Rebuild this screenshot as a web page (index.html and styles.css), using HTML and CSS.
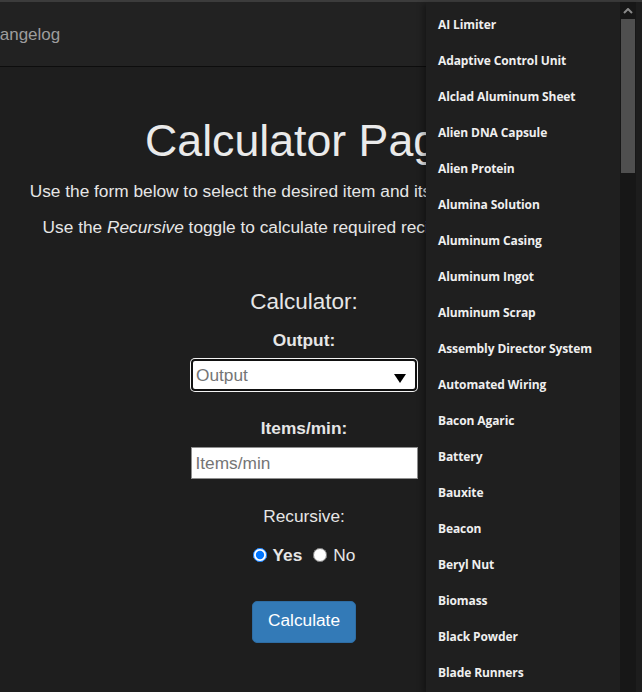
FILE: index.html
```html
<!DOCTYPE html>
<html lang="en">
<head>
<meta charset="utf-8">
<title>Calculator Page</title>
<link rel="stylesheet" href="styles.css">
</head>
<body>
<div class="topbar"></div>
<nav class="navbar">
  <a class="nav-link" href="#">Changelog</a>
</nav>
<main class="page">
  <h1 class="title">Calculator Page</h1>
  <p class="intro intro-first">Use the form below to select the desired item and its rate of production.</p>
  <p class="intro intro-second">Use the <em>Recursive</em> toggle to calculate required recipes for all inputs.</p>
  <form class="calc">
    <h3 class="calc-title">Calculator:</h3>
    <label class="field-label label-output">Output:</label>
    <div class="select">
      <span class="select-text">Output</span>
      <svg class="select-arrow" width="12" height="9" viewBox="0 0 12 9"><polygon points="0,0 12,0 6,9" fill="#000"/></svg>
    </div>
    <label class="field-label label-items">Items/min:</label>
    <input class="text-input" type="text" placeholder="Items/min">
    <div class="plain-label">Recursive:</div>
    <div class="radios">
      <label class="radio-opt"><input class="radio" type="radio" name="rec" checked><b class="radio-yes">Yes</b></label>
      <label class="radio-opt"><input class="radio" type="radio" name="rec"><span class="radio-no">No</span></label>
    </div>
    <button class="btn" type="button">Calculate</button>
  </form>
</main>

<div class="dropdown">
  <ul class="options">
    <li>AI Limiter</li>
    <li>Adaptive Control Unit</li>
    <li>Alclad Aluminum Sheet</li>
    <li>Alien DNA Capsule</li>
    <li>Alien Protein</li>
    <li>Alumina Solution</li>
    <li>Aluminum Casing</li>
    <li>Aluminum Ingot</li>
    <li>Aluminum Scrap</li>
    <li>Assembly Director System</li>
    <li>Automated Wiring</li>
    <li>Bacon Agaric</li>
    <li>Battery</li>
    <li>Bauxite</li>
    <li>Beacon</li>
    <li>Beryl Nut</li>
    <li>Biomass</li>
    <li>Black Powder</li>
    <li>Blade Runners</li>
  </ul>
  <div class="scrollbar">
    <div class="sb-arrow">
      <svg width="10" height="6" viewBox="0 0 10 6"><polyline points="1,5 5,1 9,5" fill="none" stroke="#8a8a8a" stroke-width="2"/></svg>
    </div>
    <div class="sb-thumb"></div>
  </div>
  <div class="dd-edge"></div>
</div>
</body>
</html>
```

FILE: styles.css
```css
* { box-sizing: border-box; }

html, body {
  margin: 0;
  padding: 0;
  background: #1e1e1e;
  overflow: hidden;
}

body {
  width: 642px;
  height: 692px;
  font-family: "Liberation Sans", Arial, sans-serif;
  color: #e6e6e6;
}

.topbar {
  height: 2px;
  background: #3c3c3c;
}

.navbar {
  height: 65px;
  background: #222222;
  border-bottom: 1px solid #0d0d0d;
  display: flex;
  align-items: center;
  padding-top: 2px;
}

.nav-link {
  margin-left: -22px;
  font-size: 17px;
  line-height: 60px;
  color: #9d9d9d;
  text-decoration: none;
}

.page {
  width: 608px;
  display: flex;
  flex-direction: column;
  align-items: center;
  text-align: center;
}

.title {
  margin: 50px 0 0;
  font-size: 44.7px;
  line-height: 48px;
  font-weight: 400;
  color: #eaeaea;
  white-space: nowrap;
}

.intro {
  margin: 16px 0 0;
  font-size: 17.3px;
  line-height: 20px;
  white-space: nowrap;
}

.intro-first { padding-right: 3px; }
.intro-second { padding-right: 6px; }

.calc {
  display: flex;
  flex-direction: column;
  align-items: center;
  margin: 0;
}

.calc-title {
  margin: 51px 0 0;
  font-size: 22.5px;
  line-height: 28px;
  font-weight: 400;
}

.field-label {
  display: block;
  font-size: 17.3px;
  line-height: 20px;
  font-weight: 700;
}

.label-output { margin-top: 14px; }
.label-items { margin-top: 27px; }

.select {
  margin-top: 9px;
  width: 226px;
  height: 32px;
  background: #fff;
  border: 2px solid #111;
  border-radius: 4px;
  box-shadow: 0 0 0 1px #f4f4f4;
  display: flex;
  align-items: center;
  justify-content: space-between;
  padding: 0 9px 0 3px;
}

.select-text {
  font-size: 17.3px;
  color: #757575;
}

.select-arrow {
  margin-top: 6px;
}

.text-input {
  margin-top: 9px;
  width: 227px;
  height: 32px;
  border: 1px solid #8f8f8f;
  background: #fff;
  padding: 0 4px;
  font-family: "Liberation Sans", Arial, sans-serif;
  font-size: 17.3px;
  color: #333;
  outline: none;
}

.text-input::placeholder {
  color: #757575;
}

.plain-label {
  margin-top: 27px;
  font-size: 17.3px;
  line-height: 20px;
}

.radios {
  margin-top: 19px;
  height: 20px;
  display: flex;
  align-items: center;
  gap: 11px;
  font-size: 17.3px;
  line-height: 20px;
}

.radio-opt {
  display: flex;
  align-items: center;
  gap: 6px;
}

.radio {
  margin: 0;
  width: 14px;
  height: 14px;
  accent-color: #0075ff;
}

.btn {
  margin-top: 36px;
  width: 104px;
  height: 42px;
  background: #337ab7;
  border: 1px solid #2e6da4;
  border-radius: 5px;
  color: #fff;
  font-family: "Liberation Sans", Arial, sans-serif;
  font-size: 17.3px;
  padding: 0 0 3px;
}

/* native dropdown popup overlay */
.dropdown {
  position: absolute;
  left: 426px;
  top: 2px;
  width: 216px;
  height: 690px;
  background: #1f1f1f;
  display: flex;
  box-shadow: -3px 2px 6px rgba(0, 0, 0, 0.35);
}

.options {
  list-style: none;
  margin: 0;
  padding: 5px 0 0;
  flex: 1;
  overflow: hidden;
}

.options li {
  height: 36px;
  line-height: 36px;
  padding-left: 12px;
  font-family: "Open Sans", "Noto Sans", sans-serif;
  font-size: 12px;
  font-weight: 700;
  letter-spacing: -0.1px;
  color: #efefef;
  white-space: nowrap;
}

.scrollbar {
  width: 16px;
  background: #171717;
  display: flex;
  flex-direction: column;
}

.sb-arrow {
  height: 17px;
  display: flex;
  align-items: center;
  justify-content: center;
}

.sb-thumb {
  height: 154px;
  background: #4f4f4f;
  margin: 0 1px;
}

.dd-edge {
  width: 6px;
  background: #1d1d1d;
}
```
